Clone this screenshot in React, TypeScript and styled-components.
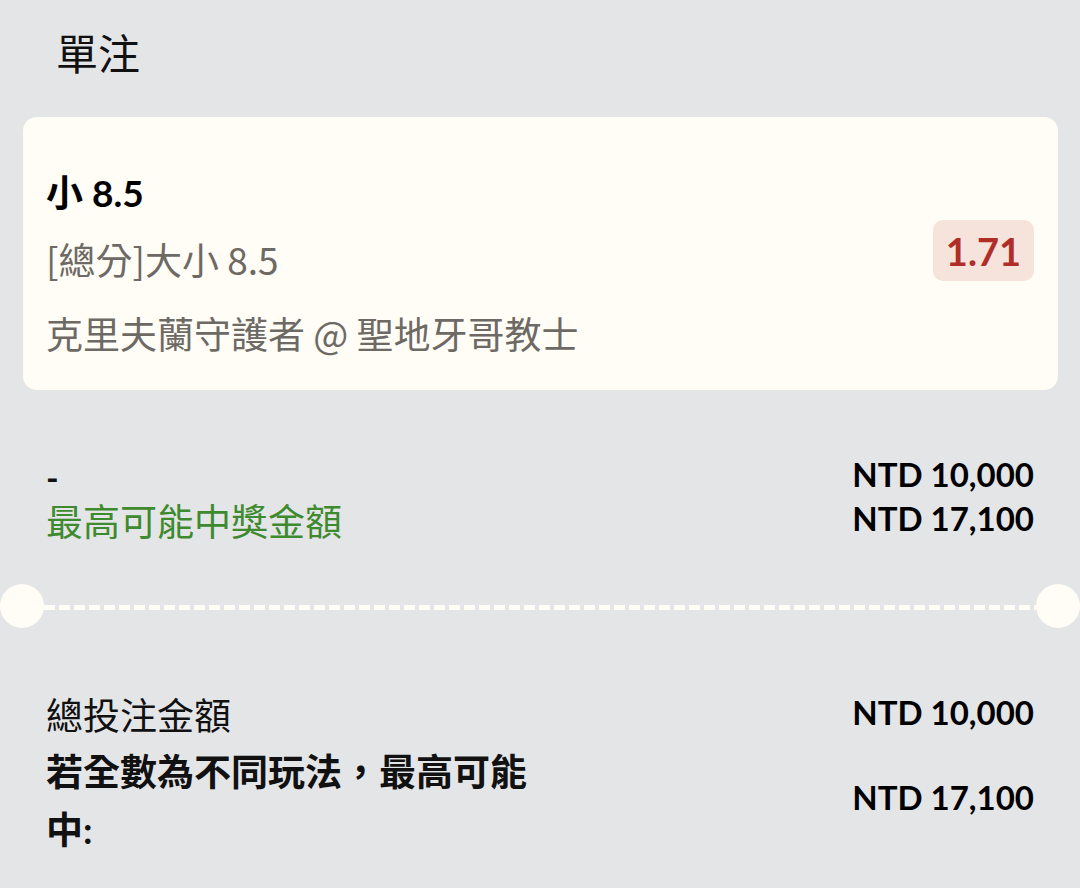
import * as React from "react";
import styled, { createGlobalStyle } from "styled-components";

const GlobalStyle = createGlobalStyle`
  html, body {
    margin: 0;
    padding: 0;
    background: #e4e5e7;
  }
  body {
    font-family: "Lato", "Noto Sans CJK TC", sans-serif;
    color: #111;
  }
`;

const CARD = "#fffdf5";

const Page = styled.div`
  width: 1080px;
  min-height: 888px;
  background: #e4e5e7;
  padding-top: 24px;
  box-sizing: border-box;
  overflow: hidden;
`;

const Title = styled.h1`
  margin: 0 0 33px 56px;
  font-size: 42px;
  line-height: 60px;
  font-weight: 400;
  color: #111;
`;

const Card = styled.div`
  margin: 0 22px 0 23px;
  height: 273px;
  box-sizing: border-box;
  padding: 0 24px 0 23px;
  background: ${CARD};
  border-radius: 14px;
  display: flex;
  align-items: center;
  justify-content: space-between;
`;

const Selection = styled.div`
  display: flex;
  flex-direction: column;
  padding-top: 19px;
`;

const Pick = styled.div`
  font-size: 37px;
  line-height: 44px;
  font-weight: 700;
  color: #000;
`;

const Market = styled.div<{ $gap: number }>`
  margin-top: ${({ $gap }) => $gap}px;
  font-family: "Noto Sans CJK TC", sans-serif;
  font-size: 37px;
  line-height: 44px;
  color: #6d6a66;
`;

const Odds = styled.div`
  margin-top: -6px;
  padding: 0 13px;
  height: 61px;
  display: flex;
  align-items: center;
  background: #f6e4dc;
  border-radius: 10px;
  color: #b02e27;
  font-size: 38px;
  font-weight: 700;
`;

const Section = styled.div<{ $top: number }>`
  margin-top: ${({ $top }) => $top}px;
  padding: 0 46px;
  display: flex;
  flex-direction: column;
`;

const Row = styled.div<{ $gap?: number }>`
  margin-top: ${({ $gap }) => $gap ?? 0}px;
  display: flex;
  justify-content: space-between;
  align-items: center;
`;

const Label = styled.div<{ $tone?: "green" | "bold" }>`
  flex: 0 0 50%;
  font-size: 37px;
  line-height: ${({ $tone }) => ($tone === "bold" ? 58 : 44)}px;
  font-weight: ${({ $tone }) => ($tone === "bold" ? 700 : 400)};
  color: ${({ $tone }) => ($tone === "green" ? "#3e8a2f" : "#111")};
`;

const Dash = styled.span`
  font-size: 34px;
  font-weight: 700;
`;

const Amount = styled.div`
  margin-top: -8px;
  font-size: 33px;
  line-height: 36px;
  font-weight: 700;
  color: #000;
  white-space: nowrap;
`;

const Divider = styled.div`
  margin-top: 40px;
  display: flex;
  align-items: center;
  height: 44px;
`;

const Notch = styled.div`
  flex: 0 0 44px;
  height: 44px;
  border-radius: 50%;
  background: ${CARD};
`;

const DashLine = styled.div`
  flex: 1;
  height: 5px;
  margin-top: 2px;
  background: repeating-linear-gradient(
    to right,
    ${CARD} 0 11px,
    transparent 11px 15px
  );
`;

export default function App() {
  return (
    <Page>
      <GlobalStyle />
      <Title>單注</Title>

      <Card>
        <Selection>
          <Pick>小 8.5</Pick>
          <Market $gap={22}>[總分]大小 8.5</Market>
          <Market $gap={30}>克里夫蘭守護者 @ 聖地牙哥教士</Market>
        </Selection>
        <Odds>1.71</Odds>
      </Card>

      <Section $top={65}>
        <Row>
          <Label>
            <Dash>-</Dash>
          </Label>
          <Amount>NTD 10,000</Amount>
        </Row>
        <Row>
          <Label $tone="green">最高可能中獎金額</Label>
          <Amount>NTD 17,100</Amount>
        </Row>
      </Section>

      <Divider>
        <Notch />
        <DashLine />
        <Notch />
      </Divider>

      <Section $top={66}>
        <Row>
          <Label>總投注金額</Label>
          <Amount>NTD 10,000</Amount>
        </Row>
        <Row $gap={5}>
          <Label $tone="bold">若全數為不同玩法，最高可能中:</Label>
          <Amount>NTD 17,100</Amount>
        </Row>
      </Section>
    </Page>
  );
}
